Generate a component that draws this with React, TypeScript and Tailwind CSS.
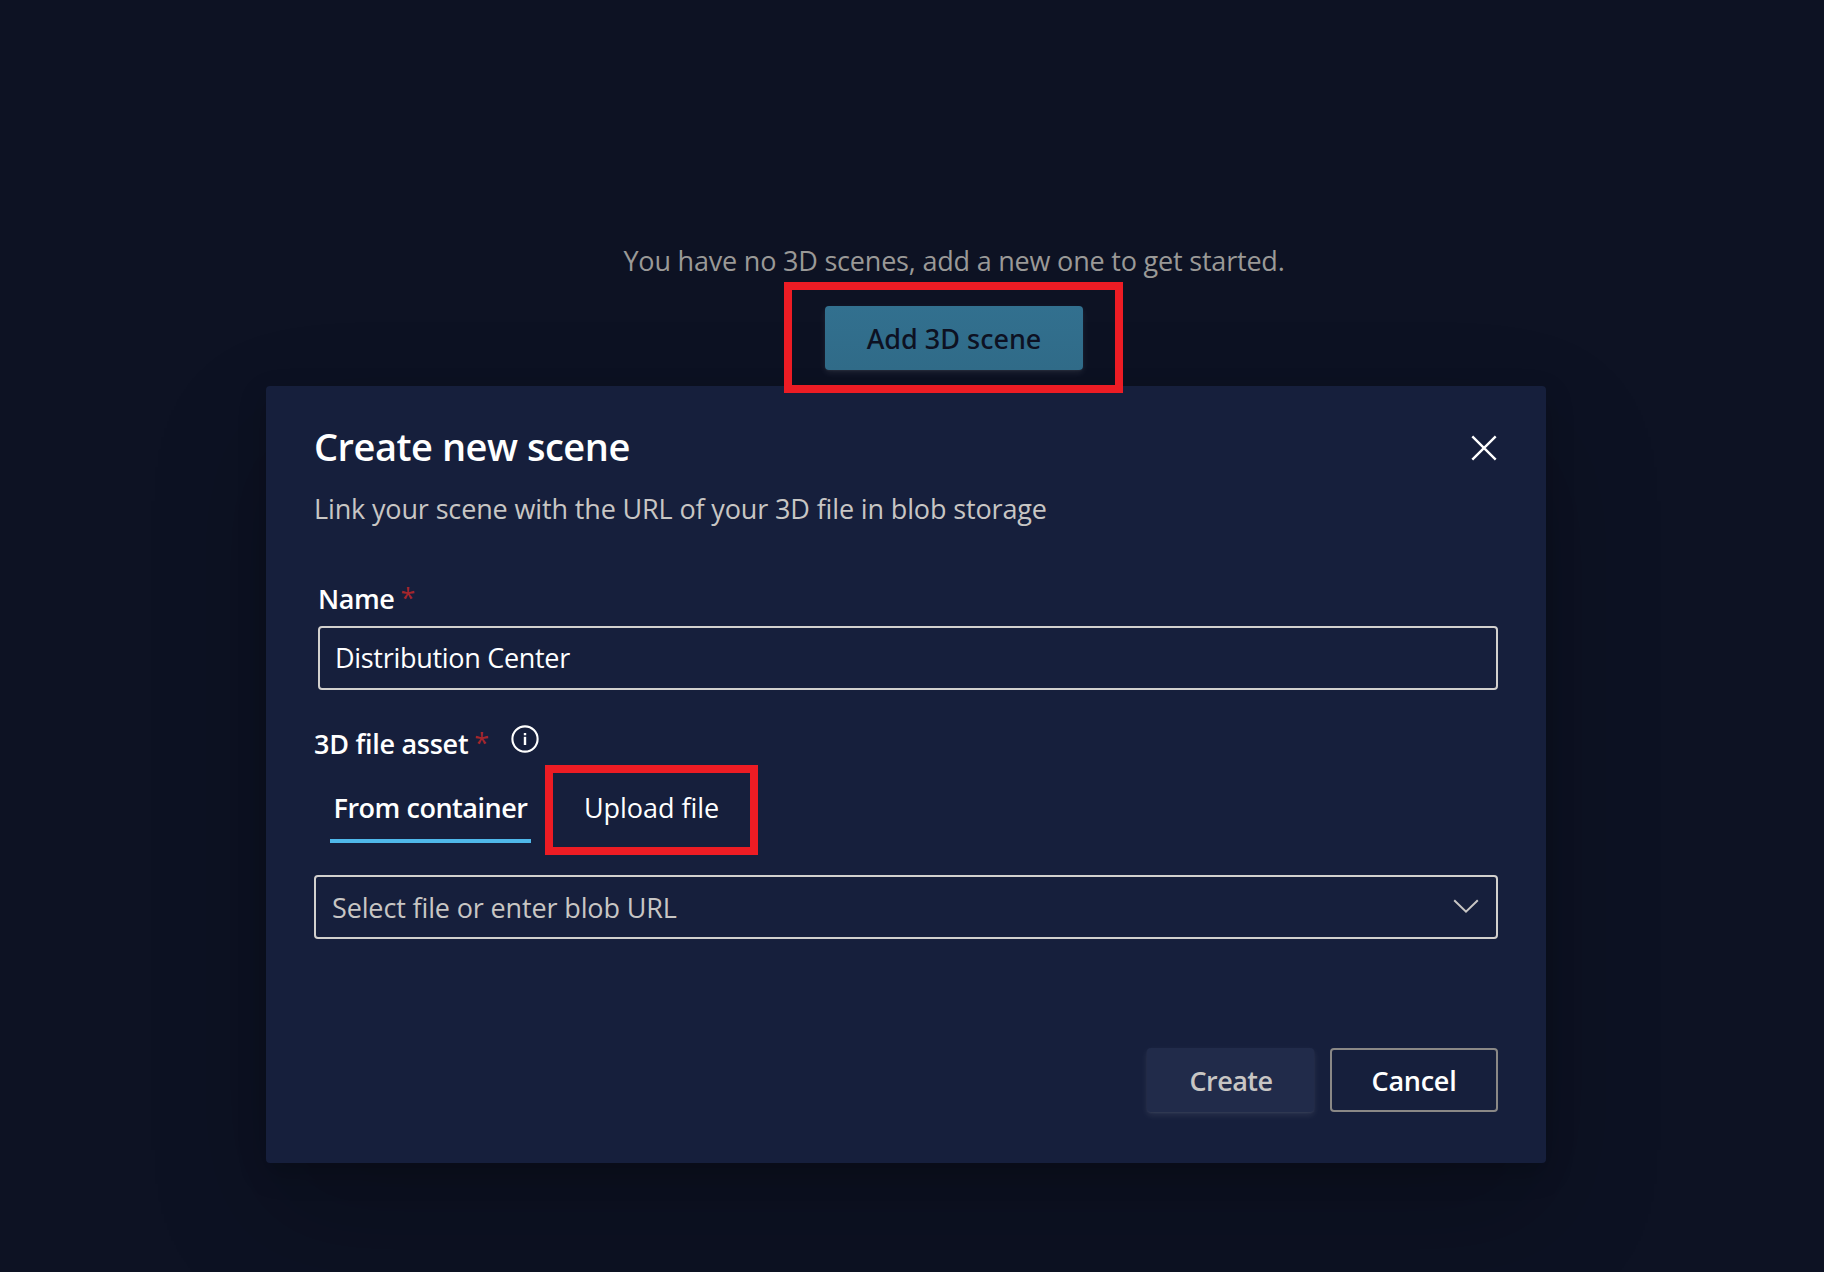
import type { ReactNode } from "react";

function Asterisk({ className }: { className: string }) {
  return <span className={`font-normal text-[#a4262c] ${className}`}>*</span>;
}

function Highlight({ className }: { className: string }) {
  return <div className={`pointer-events-none absolute border-8 border-[#ed1c24] ${className}`} />;
}

function FieldBox({ children, className }: { children: ReactNode; className: string }) {
  return (
    <div className={`flex h-16 items-center rounded-[4px] border-2 border-[#d2d0ce] ${className}`}>
      {children}
    </div>
  );
}

function InfoIcon() {
  return (
    <svg className="ml-[22px] -mt-px size-7 shrink-0" viewBox="0 0 28 28" fill="none">
      <circle cx="14" cy="14" r="12.6" stroke="#fff" strokeWidth="2.1" />
      <rect x="12.8" y="8" width="2.4" height="2.3" fill="#fff" />
      <rect x="12.8" y="11.8" width="2.4" height="8.2" fill="#fff" />
    </svg>
  );
}

export default function App() {
  return (
    <div className="flex h-[1272px] w-[1824px] flex-col overflow-hidden bg-[#0d1223] pt-[243px] font-['Open_Sans','Noto_Sans',sans-serif] text-[27px] leading-9 whitespace-nowrap text-white">
      <div className="relative z-10 ml-[825px] flex w-[258px] flex-col items-center">
        <p className="tracking-[-0.2px] text-[#9a9997]">
          You have no 3D scenes, add a new one to get started.
        </p>
        <div className="relative mt-[27px]">
          <button className="h-16 w-[258px] rounded-[4px] bg-linear-to-b from-[#32708f] to-[#306b88] pt-px font-['Noto_Sans',sans-serif] font-medium text-[#0d1122] shadow-[0_3px_7px_rgba(255,255,255,0.08),0_1px_2px_rgba(255,255,255,0.06)]">
            Add 3D scene
          </button>
          <Highlight className="-top-6 -left-[41px] h-[111px] w-[339px]" />
        </div>
      </div>

      <section className="mt-4 ml-[266px] flex h-[777px] w-[1280px] flex-col rounded-[4px] bg-[#161f3c] pr-12 pl-12 shadow-[0_51px_115px_rgba(0,0,0,0.22),0_10px_29px_rgba(0,0,0,0.18)]">
        <header className="flex h-[105px] items-start justify-between pt-[34px]">
          <h1 className="text-[38px] leading-[52px] font-semibold tracking-[-0.47px]">Create new scene</h1>
          <button className="mt-[15px] mr-px" aria-label="Close">
            <svg className="size-[26px]" viewBox="0 0 26 26" fill="none" stroke="#fff" strokeWidth="2.4">
              <path d="M1.3 1.3 24.7 24.7M24.7 1.3 1.3 24.7" />
            </svg>
          </button>
        </header>
        <p className="tracking-[-0.14px] text-[#c8c6c4]">
          Link your scene with the URL of your 3D file in blob storage
        </p>

        <div className="mt-[54px] ml-1">
          <label className="flex font-semibold">
            <span className="tracking-[-0.4px]">Name</span>
            <Asterisk className="ml-1.5 -mt-px" />
          </label>
          <FieldBox className="mt-[9px] pl-[15px]">
            <span className="tracking-[-0.3px]">Distribution Center</span>
          </FieldBox>
        </div>

        <div className="mt-9 flex h-9 items-start font-semibold">
          <span className="tracking-[-0.27px]">3D file asset</span>
          <Asterisk className="ml-1.5 -mt-px" />
          <InfoIcon />
        </div>

        <div className="mt-[17px] flex h-[64px] items-start pt-[11px]">
          <button className="ml-4 h-[53px] w-[201px] border-b-4 border-[#4fb8ea] pb-[13px] font-semibold tracking-[-0.47px]">
            From container
          </button>
          <div className="relative ml-[14px] flex h-9 w-[213px] items-center justify-center">
            <button className="tracking-[-0.05px]">Upload file</button>
            <Highlight className="-top-[25px] left-0 h-[90px] w-[213px]" />
          </div>
        </div>

        <FieldBox className="mt-8 justify-between pr-[17px] pl-4 text-[#c8c6c4]">
          <span className="mt-px tracking-[-0.14px]">Select file or enter blob URL</span>
          <svg className="-mt-0.5 h-[14px] w-[26px]" viewBox="0 0 26 14" fill="none" stroke="currentColor" strokeWidth="2">
            <path d="M1.2 1.2 13 12.6 24.8 1.2" />
          </svg>
        </FieldBox>

        <footer className="mt-[109px] flex justify-end gap-4 font-semibold">
          <button className="h-16 w-[167px] rounded-[4px] bg-[#212b4a] pt-px pl-px tracking-[-0.5px] text-[#c8c6c4] shadow-[0_3px_7px_rgba(255,255,255,0.09),0_1px_2px_rgba(255,255,255,0.07)]">
            Create
          </button>
          <button className="h-16 w-[168px] rounded-[4px] border-2 border-[#8a8886] pt-px tracking-[-0.25px]">Cancel</button>
        </footer>
      </section>
    </div>
  );
}
